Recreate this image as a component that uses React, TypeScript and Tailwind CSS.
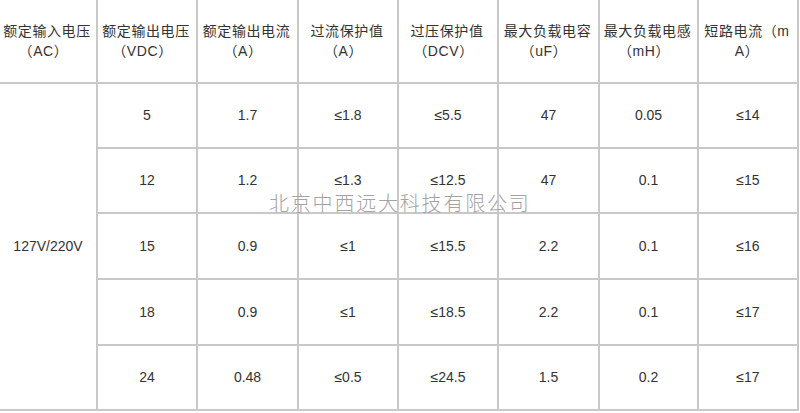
const headers: string[][] = [
  ["额定输入电压", "（AC）"],
  ["额定输出电压", "（VDC）"],
  ["额定输出电流", "（A）"],
  ["过流保护值", "（A）"],
  ["过压保护值", "（DCV）"],
  ["最大负载电容", "（uF）"],
  ["最大负载电感", "（mH）"],
  ["短路电流（m", "A）"],
];

const rows: string[][] = [
  ["5", "1.7", "≤1.8", "≤5.5", "47", "0.05", "≤14"],
  ["12", "1.2", "≤1.3", "≤12.5", "47", "0.1", "≤15"],
  ["15", "0.9", "≤1", "≤15.5", "2.2", "0.1", "≤16"],
  ["18", "0.9", "≤1", "≤18.5", "2.2", "0.1", "≤17"],
  ["24", "0.48", "≤0.5", "≤24.5", "1.5", "0.2", "≤17"],
];

const cell =
  "flex items-center justify-center text-center border-r-2 border-b-2 border-[#c8c8c8]";

export default function App() {
  return (
    <div
      className="relative w-[800px] h-[413px] bg-white text-[#333333] overflow-hidden [text-spacing-trim:trim-start]"
      style={{ fontFamily: '"Liberation Sans", Arial, "Noto Sans CJK SC", sans-serif' }}
    >
      <div className="grid grid-cols-[98px_100px_101px_100px_100px_101px_99px_100px] grid-rows-[84px_65px_65px_66px_66px_65px] text-[14px]">
        {headers.map((h, i) => (
          <div key={i} className={`${cell} leading-[20px] tracking-[0.6px] pr-[2px]`}>
            <div>
              {h[0]}
              <br />
              {h[1]}
            </div>
          </div>
        ))}
        <div className={`${cell} row-span-5`}>127V/220V</div>
        {rows.map((r, ri) =>
          r.map((v, ci) => (
            <div key={`${ri}-${ci}`} className={cell}>
              {v}
            </div>
          ))
        )}
      </div>

      {/* watermark */}
      <div
        className="absolute left-[269px] top-[190px] text-[20px] leading-[26px] tracking-[1.8px] text-[#a3a3a3] font-light whitespace-nowrap"
        style={{ fontFamily: '"Noto Sans CJK SC", sans-serif' }}
      >
        北京中西远大科技有限公司
      </div>
    </div>
  );
}
